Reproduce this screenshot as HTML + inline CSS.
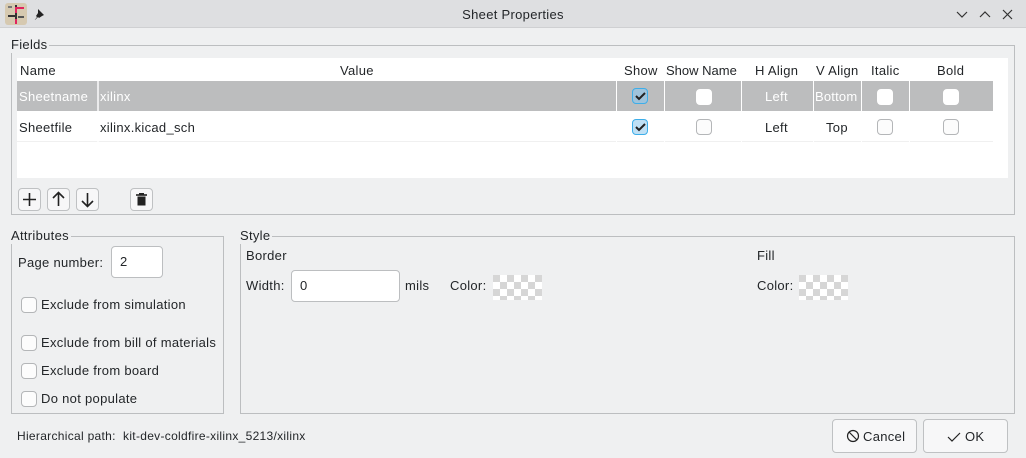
<!DOCTYPE html>
<html><head><style>
*{box-sizing:border-box;margin:0;padding:0}
body{width:1026px;height:458px;overflow:hidden;background:#eff0f1;font-family:"Liberation Sans",sans-serif;font-size:13px;letter-spacing:.3px;color:#232629;position:relative}
.a{position:absolute;white-space:nowrap}
.tb{left:0;top:0;width:1026px;height:28px;background:#dedfe1;border-bottom:1px solid #cfd0d2}
.grp{position:absolute;border:1px solid #bcbec0}
.lg{position:absolute;background:#eff0f1;padding-right:2px;top:-9px;left:-1px;line-height:16px}
.cb{position:absolute;width:16px;height:16px;border:1px solid #b4b6b8;border-radius:4px;background:#fcfcfc}
.cbc{background:#bfe0f5;border-color:#3daee9}
.cbw{border-color:#fff;background:#fff}
.btn{position:absolute;border:1px solid #bfc1c3;border-radius:4px;background:#f7f7f8}
.inp{position:absolute;border:1px solid #bcbec0;border-radius:4px;background:#fff;padding-left:8px;line-height:30px}
.chk{position:absolute;background:repeating-conic-gradient(#fff 0 25%,#d6d6d6 0 50%) 0 0/14px 14px}
</style></head><body>
<div class="a tb"></div>
<svg class="a" style="left:5px;top:3px" width="22" height="22"><rect width="22" height="22" rx="3" fill="#d6c9b0"/><rect x="10" y="2" width="2" height="18" fill="#333"/><rect x="3" y="12" width="9" height="2" fill="#333"/><rect x="12" y="4" width="7" height="2" fill="#e0245e"/><rect x="10" y="4" width="2" height="6" fill="#e0245e"/><rect x="13" y="13" width="6" height="2" fill="#555"/><rect x="10" y="16" width="2" height="5" fill="#e0245e"/><rect x="3" y="3" width="4" height="2" fill="#777"/></svg>
<svg class="a" style="left:33px;top:8px" width="12" height="12"><path d="M5 1l6 6-2 1-3 2-1-1-4 4 3-4-1-1 2-3z" fill="#222"/></svg>
<div class="a" style="left:0;width:1026px;top:7px;text-align:center">Sheet Properties</div>
<svg class="a" style="left:955px;top:8px" width="60" height="14" stroke="#333" fill="none" stroke-width="1.2"><path d="M2 4l5 5 5-5"/><path d="M25 9l5-5 5 5"/><path d="M48 2l9 9M57 2l-9 9"/></svg>

<div class="grp" style="left:11px;top:45px;width:1004px;height:170px"><div class="lg">Fields</div></div>
<div class="a" style="left:17px;top:58px;width:991px;height:120px;background:#fff"></div>
<div class="a" style="left:17px;top:81px;width:976px;height:30px;background:#bcbdbe"></div>
<div class="a" style="left:17px;top:111px;width:976px;height:31px;border-bottom:1px solid #f0f0f0"></div>
<div class="a" style="left:20px;top:63px">Name</div>
<div class="a" style="left:340px;top:63px">Value</div>
<div class="a" style="left:624px;top:63px">Show</div>
<div class="a" style="left:666px;top:63px;letter-spacing:0">Show Name</div>
<div class="a" style="left:755px;top:63px">H Align</div>
<div class="a" style="left:816px;top:63px">V Align</div>
<div class="a" style="left:871px;top:63px">Italic</div>
<div class="a" style="left:937px;top:63px">Bold</div>
<div class="a" style="left:97px;top:81px;width:2px;height:61px;background:#fff;opacity:.7"></div>
<div class="a" style="left:616px;top:81px;width:1px;height:61px;background:#fff"></div>
<div class="a" style="left:664px;top:81px;width:1px;height:61px;background:#fff"></div>
<div class="a" style="left:741px;top:81px;width:1px;height:61px;background:#fff"></div>
<div class="a" style="left:813px;top:81px;width:1px;height:61px;background:#fff"></div>
<div class="a" style="left:861px;top:81px;width:1px;height:61px;background:#fff"></div>
<div class="a" style="left:909px;top:81px;width:1px;height:61px;background:#fff"></div>
<div class="a" style="left:19px;top:89px;color:#fff">Sheetname</div>
<div class="a" style="left:100px;top:89px;color:#fff">xilinx</div>
<div class="a" style="left:765px;top:89px;color:#fff">Left</div>
<div class="a" style="left:815px;top:89px;color:#fff;letter-spacing:.2px">Bottom</div>
<div class="a" style="left:19px;top:120px">Sheetfile</div>
<div class="a" style="left:100px;top:120px">xilinx.kicad_sch</div>
<div class="a" style="left:765px;top:120px">Left</div>
<div class="a" style="left:826px;top:120px">Top</div>
<div class="cb cbc" style="left:632px;top:88px;background:#9fc3db"></div>
<div class="cb cbw" style="left:696px;top:89px"></div>
<div class="cb cbw" style="left:877px;top:89px"></div>
<div class="cb cbw" style="left:943px;top:89px"></div>
<div class="cb cbc" style="left:632px;top:119px"></div>
<div class="cb" style="left:696px;top:119px"></div>
<div class="cb" style="left:877px;top:119px"></div>
<div class="cb" style="left:943px;top:119px"></div>
<svg class="a" style="left:635px;top:91px" width="11" height="10"><path d="M1 5l3 3 6-6" stroke="#222" stroke-width="2" fill="none"/></svg>
<svg class="a" style="left:635px;top:122px" width="11" height="10"><path d="M1 5l3 3 6-6" stroke="#222" stroke-width="2" fill="none"/></svg>
<div class="btn" style="left:18px;top:188px;width:23px;height:23px"></div>
<div class="btn" style="left:47px;top:188px;width:23px;height:23px"></div>
<div class="btn" style="left:76px;top:188px;width:23px;height:23px"></div>
<div class="btn" style="left:130px;top:188px;width:23px;height:23px"></div>
<svg class="a" style="left:18px;top:188px" width="140" height="23" stroke="#222" stroke-width="1.6" fill="none"><path d="M11.5 5v13M5 11.5h13"/><path d="M40.5 5v13M35 10l5.5-5.5 5.5 5.5"/><path d="M69.5 5v13M64 13l5.5 5.5 5.5-5.5"/><path d="M118 7h11" /><rect x="119.5" y="8.5" width="8" height="9" fill="#222" stroke="none"/><rect x="121" y="5" width="5" height="2" fill="#222" stroke="none"/></svg>

<div class="grp" style="left:11px;top:236px;width:213px;height:178px"><div class="lg">Attributes</div></div>
<div class="a" style="left:18px;top:255px">Page number:</div>
<div class="inp" style="left:111px;top:246px;width:52px;height:32px">2</div>
<div class="cb" style="left:21px;top:297px"></div><div class="a" style="left:41px;top:297px">Exclude from simulation</div>
<div class="cb" style="left:21px;top:335px"></div><div class="a" style="left:41px;top:335px">Exclude from bill of materials</div>
<div class="cb" style="left:21px;top:363px"></div><div class="a" style="left:41px;top:363px">Exclude from board</div>
<div class="cb" style="left:21px;top:391px"></div><div class="a" style="left:41px;top:391px">Do not populate</div>

<div class="grp" style="left:240px;top:236px;width:775px;height:178px"><div class="lg">Style</div></div>
<div class="a" style="left:246px;top:248px">Border</div>
<div class="a" style="left:246px;top:278px">Width:</div>
<div class="inp" style="left:291px;top:270px;width:109px;height:32px">0</div>
<div class="a" style="left:405px;top:278px">mils</div>
<div class="a" style="left:450px;top:278px">Color:</div>
<div class="chk" style="left:493px;top:275px;width:49px;height:25px"></div>
<div class="a" style="left:757px;top:248px">Fill</div>
<div class="a" style="left:757px;top:278px">Color:</div>
<div class="chk" style="left:799px;top:275px;width:49px;height:25px"></div>

<div class="a" style="left:17px;top:429px;font-size:12px">Hierarchical path:&nbsp; kit-dev-coldfire-xilinx_5213/xilinx</div>
<div class="btn" style="left:832px;top:419px;width:85px;height:34px"></div>
<svg class="a" style="left:846px;top:429px" width="14" height="14" stroke="#222" fill="none" stroke-width="1.2"><circle cx="7" cy="7" r="5.5"/><path d="M3 3l8 8"/></svg>
<div class="a" style="left:863px;top:429px">Cancel</div>
<div class="btn" style="left:923px;top:419px;width:85px;height:34px"></div>
<svg class="a" style="left:947px;top:431px" width="14" height="12" stroke="#222" fill="none" stroke-width="1.2"><path d="M1 6l4 4 8-8"/></svg>
<div class="a" style="left:965px;top:429px">OK</div>
</body></html>
